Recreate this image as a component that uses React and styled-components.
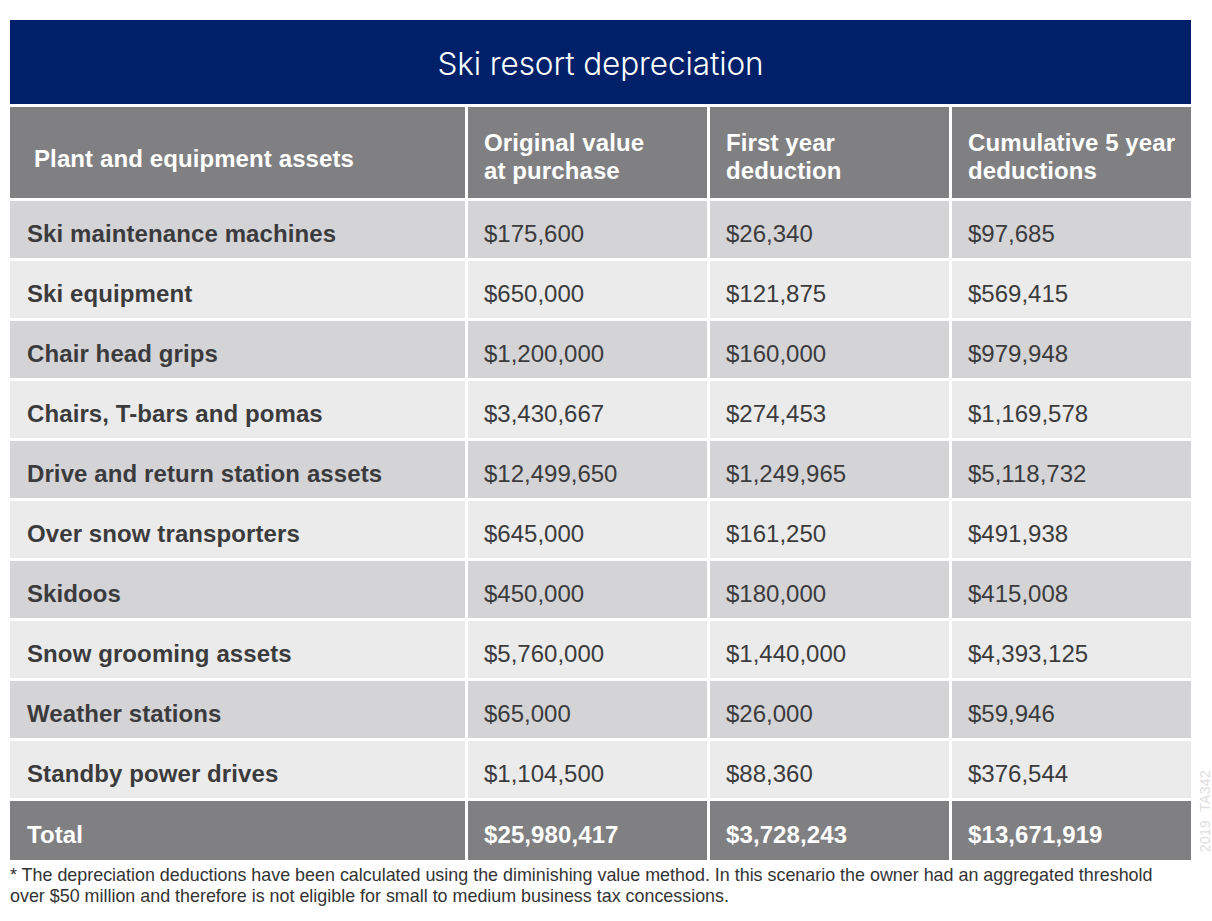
import React from "react";
import styled, { createGlobalStyle } from "styled-components";

const GlobalStyle = createGlobalStyle`
  body {
    margin: 0;
    background: #fff;
    font-family: "Liberation Sans", Arial, sans-serif;
  }
`;

const Page = styled.div`
  position: relative;
  width: 1212px;
  height: 921px;
  padding: 20px 0 0 10px;
  box-sizing: border-box;
`;

const TitleBar = styled.div`
  width: 1181px;
  height: 84px;
  background: #00216a;
  color: #fff;
  display: flex;
  align-items: center;
  justify-content: center;
  font-family: Inter, "Liberation Sans", sans-serif;
  font-weight: 300;
  font-size: 31.5px;
  letter-spacing: -0.1px;
  padding-top: 2px;
  box-sizing: border-box;
`;

const Grid = styled.div`
  width: 1181px;
  margin-top: 3px;
  display: grid;
  grid-template-columns: 455px 239px 239px 239px;
  grid-template-rows: 91px repeat(10, 57px) 59px;
  gap: 3px;
`;

const Cell = styled.div`
  display: flex;
  align-items: center;
  padding-left: ${(p) => (p.$first ? "17px" : "16px")};
  padding-top: 8px;
  box-sizing: border-box;
  font-size: 24px;
  color: ${(p) => (p.$light ? "#fff" : "#3b3b3d")};
  font-weight: ${(p) => (p.$bold ? 700 : 400)};
  letter-spacing: ${(p) => (p.$bold ? "0.1px" : "0")};
  background: ${(p) => p.$bg};
  line-height: 28px;
`;

const HeadCell = styled(Cell)`
  padding-left: ${(p) => (p.$first ? "24px" : "16px")};
  padding-top: ${(p) => (p.$first ? "12px" : "8px")};
`;

const Footnote = styled.p`
  margin: 5px 0 0;
  font-size: 17.9px;
  line-height: 21px;
  color: #333;
  width: 1200px;
`;

const Watermark = styled.div`
  position: absolute;
  left: 1197px;
  top: 770px;
  writing-mode: vertical-rl;
  transform: rotate(180deg);
  font-size: 14px;
  color: #dedede;
  letter-spacing: 0.3px;
`;

const rows = [
  ["Ski maintenance machines", "$175,600", "$26,340", "$97,685"],
  ["Ski equipment", "$650,000", "$121,875", "$569,415"],
  ["Chair head grips", "$1,200,000", "$160,000", "$979,948"],
  ["Chairs, T-bars and pomas", "$3,430,667", "$274,453", "$1,169,578"],
  ["Drive and return station assets", "$12,499,650", "$1,249,965", "$5,118,732"],
  ["Over snow transporters", "$645,000", "$161,250", "$491,938"],
  ["Skidoos", "$450,000", "$180,000", "$415,008"],
  ["Snow grooming assets", "$5,760,000", "$1,440,000", "$4,393,125"],
  ["Weather stations", "$65,000", "$26,000", "$59,946"],
  ["Standby power drives", "$1,104,500", "$88,360", "$376,544"],
];

const headers = [
  "Plant and equipment assets",
  ["Original value", "at purchase"],
  ["First year", "deduction"],
  ["Cumulative 5 year", "deductions"],
];

const totals = ["Total", "$25,980,417", "$3,728,243", "$13,671,919"];

const GRAY = "#808083";

export default function App() {
  return (
    <>
      <GlobalStyle />
      <Page>
        <TitleBar>Ski resort depreciation</TitleBar>
        <Grid>
          {headers.map((h, i) => (
            <HeadCell key={i} $first={i === 0} $bold $light $bg={GRAY}>
              {Array.isArray(h) ? (
                <div>
                  {h[0]}
                  <br />
                  {h[1]}
                </div>
              ) : (
                h
              )}
            </HeadCell>
          ))}
          {rows.map((r, ri) =>
            r.map((c, ci) => (
              <Cell
                key={ri + "-" + ci}
                $first={ci === 0}
                $bold={ci === 0}
                $bg={ri % 2 === 0 ? "#d4d4d6" : "#ebebeb"}
              >
                {c}
              </Cell>
            ))
          )}
          {totals.map((t, i) => (
            <Cell key={"t" + i} $first={i === 0} $bold $light $bg={GRAY}>
              {t}
            </Cell>
          ))}
        </Grid>
        <Footnote>
          * The depreciation deductions have been calculated using the diminishing value method. In this scenario the owner had an aggregated threshold
          <br />
          over $50 million and therefore is not eligible for small to medium business tax concessions.
        </Footnote>
        <Watermark>2019_TA342</Watermark>
      </Page>
    </>
  );
}
